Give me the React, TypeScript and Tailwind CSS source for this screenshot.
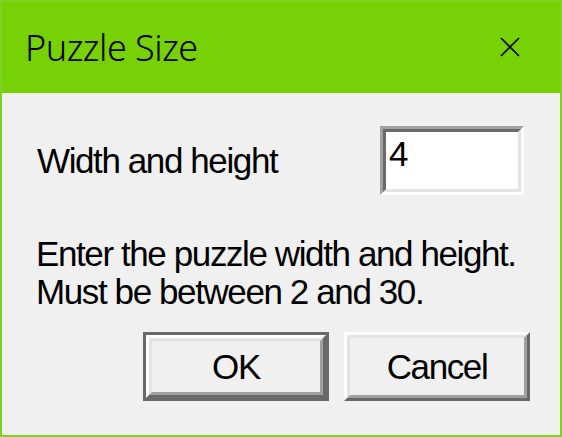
const bodyFont = { fontFamily: '"Liberation Sans", Arial, sans-serif' };

function Button({ label, isDefault = false }: { label: string; isDefault?: boolean }) {
  const face = (
    <div className="flex-1 flex border-t-[3px] border-l-[3px] border-r-[3px] border-b-[3px] border-t-white border-l-white border-r-[#696969] border-b-[#696969]">
      <div className="flex-1 flex items-center justify-center border-t-[3px] border-l-[3px] border-r-[3px] border-b-[3px] border-t-[#e3e3e3] border-l-[#e3e3e3] border-r-[#a0a0a0] border-b-[#a0a0a0] bg-[#f0f0f0]">
        <span className="text-[35px] leading-[35px] tracking-[-1.4px] text-black" style={bodyFont}>
          {label}
        </span>
      </div>
    </div>
  );
  return (
    <div className={`w-[186px] h-[69px] flex ${isDefault ? "border-[3px] border-[#696969]" : ""}`}>
      {face}
    </div>
  );
}

export default function App() {
  return (
    <div className="w-[562px] h-[437px] flex flex-col border-2 border-[#7ed321] bg-[#f0f0f0]">
      {/* title bar */}
      <div className="h-[91px] flex items-start bg-[#76d105] pl-[23px] pt-[28px] pr-[40px]">
        <span
          className="text-[36px] leading-[36px] tracking-[-0.5px] font-[350] text-black"
          style={{ fontFamily: '"Noto Sans", "Segoe UI", sans-serif' }}
        >
          Puzzle Size
        </span>
        <svg width="20" height="20" viewBox="0 0 20 20" className="ml-auto mt-[7px]">
          <path d="M1 1 L19 19 M19 1 L1 19" stroke="#000" strokeWidth="1.6" fill="none" />
        </svg>
      </div>

      {/* body */}
      <div className="flex-1 flex flex-col pl-[34px]">
        <div className="flex items-center mt-[33px] pr-[36px]">
          <span className="text-[35px] leading-[35px] tracking-[-1.4px] text-black pl-[1px]" style={bodyFont}>
            Width and height
          </span>
          <div className="ml-auto w-[144px] h-[69px] flex border-[3px] border-t-[#a0a0a0] border-l-[#a0a0a0] border-r-white border-b-white">
            <div className="flex-1 flex border-[3px] border-t-[#696969] border-l-[#696969] border-r-[#e3e3e3] border-b-[#e3e3e3] bg-white pl-[3px] pt-[4px]">
              <span className="text-[35px] leading-[35px] text-black" style={bodyFont}>
                4
              </span>
            </div>
          </div>
        </div>

        <p className="mt-[40px] text-[35px] leading-[38px] tracking-[-1.4px] text-black" style={bodyFont}>
          Enter the puzzle width and height.
          <br />
          Must be between 2 and 30.
        </p>

        <div className="flex justify-end gap-[15px] mt-[21px] pr-[30px]">
          <Button label="OK" isDefault />
          <Button label="Cancel" />
        </div>
      </div>
    </div>
  );
}
